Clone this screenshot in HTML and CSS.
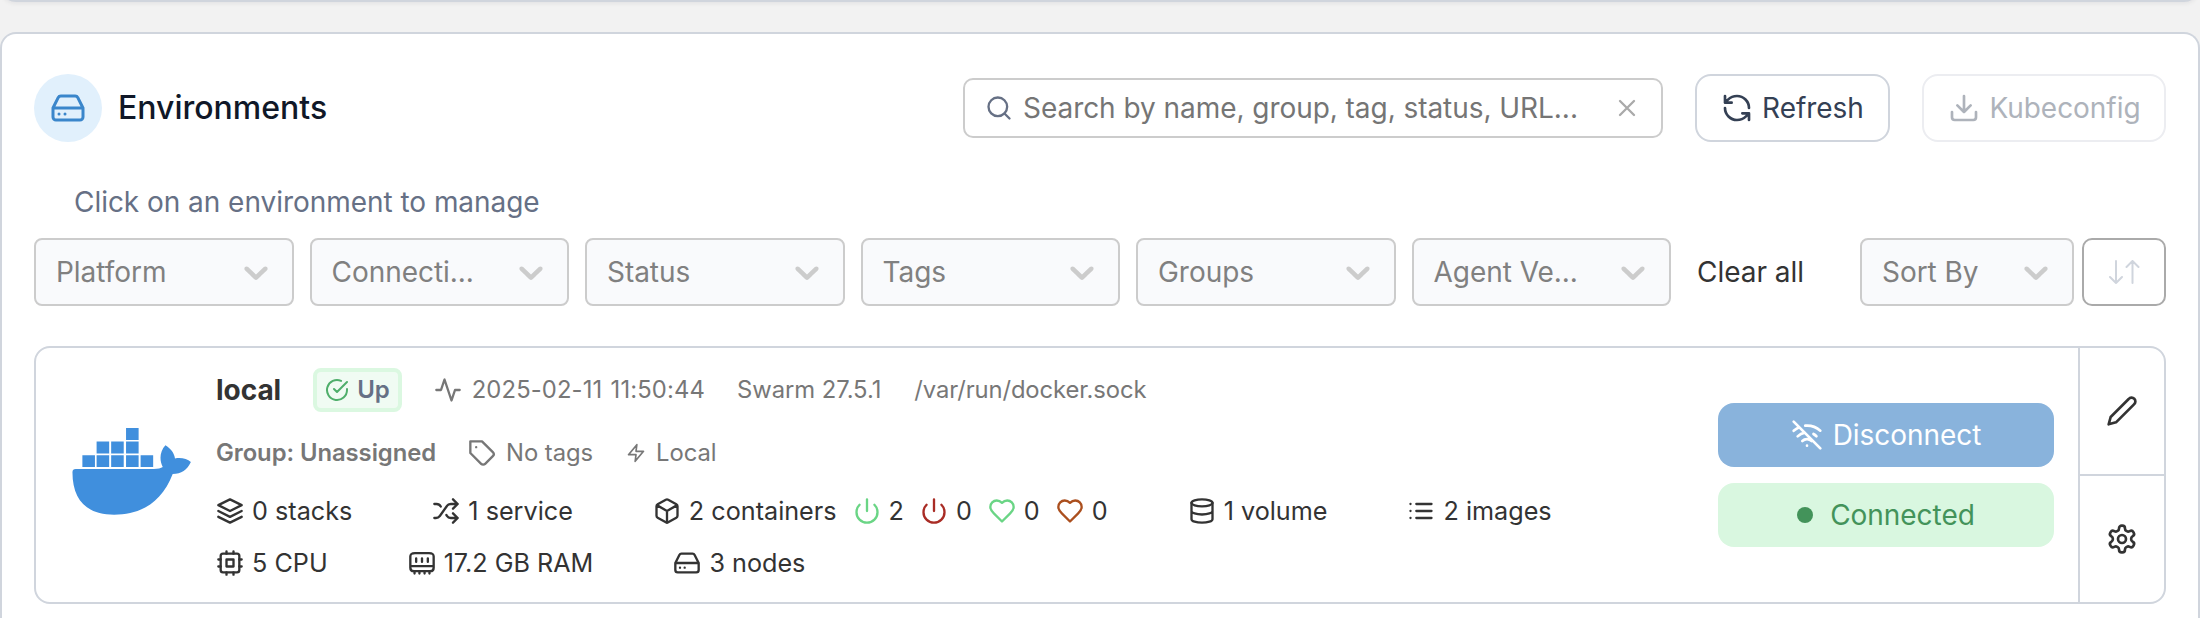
FILE: index.html
```html
<!DOCTYPE html>
<html lang="en">
<head>
<meta charset="utf-8">
<title>Environments</title>
<link rel="stylesheet" href="styles.css">
</head>
<body>
<svg class="sprite" aria-hidden="true">
  <symbol id="hard-drive" viewBox="0 0 24 24"><path d="M22 12H2M5.45 5.11 2 12v6a2 2 0 0 0 2 2h16a2 2 0 0 0 2-2v-6l-3.45-6.89A2 2 0 0 0 16.76 4H7.24a2 2 0 0 0-1.79 1.11zM6 16h.01M10 16h.01"/></symbol>
  <symbol id="search" viewBox="0 0 24 24"><circle cx="11" cy="11" r="8"/><path d="m21 21-4.3-4.3"/></symbol>
  <symbol id="close" viewBox="0 0 24 24"><path d="M18 6 6 18M6 6l12 12"/></symbol>
  <symbol id="refresh" viewBox="0 0 24 24"><path d="M21 12a9 9 0 0 0-9-9 9.75 9.75 0 0 0-6.74 2.74L3 8M3 3v5h5M3 12a9 9 0 0 0 9 9 9.75 9.75 0 0 0 6.74-2.74L21 16M16 16h5v5"/></symbol>
  <symbol id="download" viewBox="0 0 24 24"><path d="M21 15v4a2 2 0 0 1-2 2H5a2 2 0 0 1-2-2v-4M7 10l5 5 5-5M12 15V3"/></symbol>
  <symbol id="chevron" viewBox="0 0 20 20"><path d="M4.516 7.548c0.436-0.446 1.043-0.481 1.576 0l3.908 3.747 3.908-3.747c0.533-0.481 1.141-0.446 1.574 0 0.436 0.445 0.408 1.197 0 1.615-0.406 0.418-4.695 4.502-4.695 4.502-0.217 0.223-0.502 0.335-0.787 0.335s-0.57-0.112-0.789-0.335c0 0-4.287-4.084-4.695-4.502s-0.436-1.17 0-1.615z"/></symbol>
  <symbol id="sort" viewBox="0 0 32 24"><path d="M8 1v22M2 17l6 6 6-6M24.500 23V1M18.500 7l6-6 6 6"/></symbol>
  <symbol id="check-circle" viewBox="0 0 24 24"><path d="M22 11.08V12a10 10 0 1 1-5.93-9.14M22 4 12 14.01l-3-3"/></symbol>
  <symbol id="activity" viewBox="0 0 24 24"><path d="M22 12h-4l-3 9L9 3l-3 9H2"/></symbol>
  <symbol id="tag" viewBox="0 0 24 24"><path d="M12 2H2v10l9.29 9.29c.94.94 2.48.94 3.42 0l6.58-6.58c.94-.94.94-2.48 0-3.42L12 2ZM7 7h.01"/></symbol>
  <symbol id="zap" viewBox="0 0 24 24"><path d="M13 2 3 14h9l-1 8 10-12h-9l1-8z"/></symbol>
  <symbol id="layers" viewBox="0 0 24 24"><path d="m12 2 10 5-10 5L2 7zM2 17l10 5 10-5M2 12l10 5 10-5"/></symbol>
  <symbol id="shuffle" viewBox="0 0 24 24"><path d="M2 18h1.4c1.3 0 2.5-.6 3.3-1.7l6.1-8.6c.7-1.1 2-1.7 3.3-1.7H22M18 2l4 4-4 4M2 6h1.9c1.5 0 2.9.9 3.6 2.2M22 18h-5.9c-1.3 0-2.6-.7-3.3-1.8l-.5-.8M18 14l4 4-4 4"/></symbol>
  <symbol id="box" viewBox="0 0 24 24"><path d="M21 16V8a2 2 0 0 0-1-1.730l-7-4a2 2 0 0 0-2 0l-7 4A2 2 0 0 0 3 8v8a2 2 0 0 0 1 1.730l7 4a2 2 0 0 0 2 0l7-4A2 2 0 0 0 21 16zM3.27 6.96 12 12.01l8.730-5.050M12 22.080V12"/></symbol>
  <symbol id="power" viewBox="0 0 24 24"><path d="M18.360 6.640a9 9 0 1 1-12.730 0M12 2v10"/></symbol>
  <symbol id="heart" viewBox="0 0 24 24"><path d="M19 14c1.490-1.460 3-3.210 3-5.500A5.500 5.500 0 0 0 16.500 3c-1.760 0-3 .5-4.500 2-1.500-1.500-2.740-2-4.500-2A5.500 5.500 0 0 0 2 8.500c0 2.300 1.500 4.050 3 5.500l7 7Z"/></symbol>
  <symbol id="database" viewBox="0 0 24 24"><ellipse cx="12" cy="5" rx="9" ry="3"/><path d="M21 12c0 1.660-4 3-9 3s-9-1.340-9-3M3 5v14c0 1.660 4 3 9 3s9-1.340 9-3V5"/></symbol>
  <symbol id="list" viewBox="0 0 24 24"><path d="M8 6h13M8 12h13M8 18h13M3 6h.01M3 12h.01M3 18h.01"/></symbol>
  <symbol id="cpu" viewBox="0 0 24 24"><rect x="4" y="4" width="16" height="16" rx="2"/><path d="M9 9h6v6H9zM15 2v2M15 20v2M2 15h2M2 9h2M20 15h2M20 9h2M9 2v2M9 20v2"/></symbol>
  <symbol id="memory" viewBox="0 0 24 24"><path d="M2 16V6.500C2 4 3 3.500 6 3.500h12c3 0 4 .5 4 3V16c0 2-1 3-3 3H5c-2 0-3-1-3-3zM2 14.700h20M7 8v3M12 8v3M17 8v3M5.600 19v2M9.800 19v2M14.200 19v2M18.400 19v2"/></symbol>
  <symbol id="wifi-off" viewBox="0 0 24 24"><path d="m2 2 20 20M8.500 16.500a5 5 0 0 1 7 0M2 8.820a15 15 0 0 1 4.170-2.650M10.660 5c4.010-.36 8.140.9 11.340 3.760M16.850 11.250a10 10 0 0 1 2.220 1.680M5 13a10 10 0 0 1 5.240-2.760M12 20h.01"/></symbol>
  <symbol id="pencil" viewBox="0 0 24 24"><path d="M17 3a2.850 2.830 0 1 1 4 4L7.500 20.500 2 22l1.500-5.500Z"/></symbol>
  <symbol id="gear" viewBox="0 0 24 24"><path d="M12.220 2h-.44a2 2 0 0 0-2 2v.18a2 2 0 0 1-1 1.730l-.43.25a2 2 0 0 1-2 0l-.15-.08a2 2 0 0 0-2.730.73l-.22.38a2 2 0 0 0 .73 2.730l.15.1a2 2 0 0 1 1 1.720v.51a2 2 0 0 1-1 1.740l-.15.09a2 2 0 0 0-.73 2.730l.22.38a2 2 0 0 0 2.730.73l.15-.08a2 2 0 0 1 2 0l.43.25a2 2 0 0 1 1 1.730V20a2 2 0 0 0 2 2h.44a2 2 0 0 0 2-2v-.18a2 2 0 0 1 1-1.730l.43-.25a2 2 0 0 1 2 0l.15.08a2 2 0 0 0 2.730-.73l.22-.39a2 2 0 0 0-.73-2.730l-.15-.08a2 2 0 0 1-1-1.740v-.5a2 2 0 0 1 1-1.740l.15-.09a2 2 0 0 0 .73-2.730l-.22-.38a2 2 0 0 0-2.730-.73l-.15.08a2 2 0 0 1-2 0l-.43-.25a2 2 0 0 1-1-1.730V4a2 2 0 0 0-2-2z"/><circle cx="12" cy="12" r="3"/></symbol>
</svg>

<div class="prev-panel"></div>

<main class="panel">
  <header class="toolbar">
    <div class="badge-circle"><svg class="icon s36"><use href="#hard-drive"/></svg></div>
    <h1 class="title">Environments</h1>
    <div class="search">
      <svg class="icon s28 search-icon"><use href="#search"/></svg>
      <span class="search-text">Search by name, group, tag, status, URL...</span>
      <svg class="icon s28 search-clear"><use href="#close"/></svg>
    </div>
    <button class="btn refresh"><svg class="icon s32"><use href="#refresh"/></svg><span>Refresh</span></button>
    <button class="btn kubeconfig"><svg class="icon s32"><use href="#download"/></svg><span>Kubeconfig</span></button>
  </header>

  <p class="subtitle">Click on an environment to manage</p>

  <div class="filters">
    <div class="select"><span>Platform</span><svg class="chev"><use href="#chevron"/></svg></div>
    <div class="select"><span>Connecti...</span><svg class="chev"><use href="#chevron"/></svg></div>
    <div class="select"><span>Status</span><svg class="chev"><use href="#chevron"/></svg></div>
    <div class="select"><span>Tags</span><svg class="chev"><use href="#chevron"/></svg></div>
    <div class="select"><span>Groups</span><svg class="chev"><use href="#chevron"/></svg></div>
    <div class="select"><span>Agent Ve...</span><svg class="chev"><use href="#chevron"/></svg></div>
    <span class="clear">Clear all</span>
    <div class="select sort-by"><span>Sort By</span><svg class="chev"><use href="#chevron"/></svg></div>
    <button class="sort-dir"><svg class="icon sort-icon"><use href="#sort"/></svg></button>
  </div>

  <section class="env">
    <div class="logo">
      <svg class="docker" viewBox="216 293 360 263">
        <path d="M378 293h38v36h-38zM289 334h38v36h-38zM333 334h38v36h-38zM378 334h38v36h-38zM246 375h38v36h-38zM289 375h38v36h-38zM333 375h38v36h-38zM378 375h38v36h-38zM422 375h38v36h-38z"/>
        <path d="M226 417H462C475 417 483 415 489 411C478 390 480 363 497 345C513 355 524 369 526 385C545 382 563 386 574 396C563 420 545 432 519 432C487 516 425 555 342 555C259 555 216 511 216 427Q216 417 226 417Z"/>
      </svg>
    </div>
    <div class="info">
      <div class="row row-title">
        <span class="name">local</span>
        <span class="status"><svg class="icon s24"><use href="#check-circle"/></svg>Up</span>
        <span class="meta m-time"><svg class="icon s28"><use href="#activity"/></svg>2025-02-11 11:50:44</span>
        <span class="meta m-engine">Swarm 27.5.1</span>
        <span class="meta m-url">/var/run/docker.sock</span>
      </div>
      <div class="row row-group">
        <span class="group">Group: Unassigned</span>
        <span class="meta m-tags"><svg class="icon s28"><use href="#tag"/></svg>No tags</span>
        <span class="meta m-local"><svg class="icon s20"><use href="#zap"/></svg>Local</span>
      </div>
      <div class="row stats">
        <span class="stat"><svg class="icon s28"><use href="#layers"/></svg>0 stacks</span>
        <span class="stat"><svg class="icon s28"><use href="#shuffle"/></svg>1 service</span>
        <span class="stat containers"><svg class="icon s28"><use href="#box"/></svg>2 containers
          <span class="counts">
            <span class="count"><svg class="icon s28 ok"><use href="#power"/></svg>2</span>
            <span class="count"><svg class="icon s28 bad"><use href="#power"/></svg>0</span>
            <span class="count"><svg class="icon s28 ok"><use href="#heart"/></svg>0</span>
            <span class="count"><svg class="icon s28 warn"><use href="#heart"/></svg>0</span>
          </span>
        </span>
        <span class="stat"><svg class="icon s28"><use href="#database"/></svg>1 volume</span>
        <span class="stat"><svg class="icon s28"><use href="#list"/></svg>2 images</span>
      </div>
      <div class="row stats stats-2">
        <span class="stat"><svg class="icon s28"><use href="#cpu"/></svg>5 CPU</span>
        <span class="stat"><svg class="icon s28"><use href="#memory"/></svg>17.2 GB RAM</span>
        <span class="stat"><svg class="icon s28"><use href="#hard-drive"/></svg>3 nodes</span>
      </div>
    </div>
    <div class="connect">
      <button class="pill disconnect"><svg class="icon s32"><use href="#wifi-off"/></svg>Disconnect</button>
      <div class="pill connected"><i class="dot"></i>Connected</div>
    </div>
    <div class="side">
      <button class="side-btn"><svg class="icon s32"><use href="#pencil"/></svg></button>
      <button class="side-btn"><svg class="icon s32"><use href="#gear"/></svg></button>
    </div>
  </section>
</main>
</body>
</html>
```

FILE: styles.css
```css
* { box-sizing: border-box; }
body { margin: 0; height: 618px; overflow: hidden; background: #f2f2f2; color: #333; font-family: Inter, "Liberation Sans", sans-serif; font-size: 28px; line-height: 40px; letter-spacing: -.04px; }
button { font: inherit; letter-spacing: inherit; color: inherit; background: none; border: 0; padding: 0; margin: 0; }
.sprite { display: none; }
.icon { display: block; flex: none; fill: none; stroke: currentColor; stroke-width: 2; stroke-linecap: round; stroke-linejoin: round; }
.s20 { width: 20px; height: 20px; }
.s24 { width: 24px; height: 24px; }
.s28 { width: 28px; height: 28px; }
.s32 { width: 32px; height: 32px; }
.s36 { width: 36px; height: 36px; }

.prev-panel { height: 18px; margin-top: -16px; background: #fff; border: 2px solid #d0d5dd; border-radius: 0 0 16px 16px; box-shadow: 0 2px 4px rgba(16, 24, 40, .06); }
.panel { margin-top: 30px; height: 586px; padding: 40px 32px 0; background: #fff; border: 2px solid #d0d5dd; border-bottom: 0; border-radius: 16px 16px 0 0; }

.toolbar { display: flex; align-items: center; height: 68px; }
.badge-circle { display: grid; place-items: center; width: 68px; height: 68px; border-radius: 50%; background: #e1f0fc; color: #3a86cb; }
.title { margin: 0 0 0 16px; font-size: 32px; font-weight: 500; color: #101828; letter-spacing: 0; }
.search { display: flex; align-items: center; width: 700px; height: 60px; margin-left: auto; padding: 0 20px; border: 2px solid #ccc; border-radius: 10px; }
.search-icon { color: #667085; }
.search-text { margin-left: 10px; color: #757575; white-space: nowrap; letter-spacing: -.05px; }
.search-clear { margin-left: auto; color: #aaa; }
.btn { display: flex; align-items: center; justify-content: center; height: 68px; margin-left: 32px; border: 2px solid #d0d5dd; border-radius: 16px; }
.refresh { gap: 9px; width: 195px; color: #344054; }
.kubeconfig { gap: 9px; width: 244px; padding-left: 1px; color: #aeb3bb; border-color: #ecedf1; }

.subtitle { margin: 40px 0 0 40px; color: #667085; }

.filters { display: flex; align-items: center; height: 68px; margin-top: 16px; }
.select { display: flex; align-items: center; justify-content: space-between; width: 259.5px; height: 68px; margin-right: 16px; padding: 0 16px 0 20px; background: #f9fafc; border: 2px solid #ccc; border-radius: 8px; color: #808080; white-space: nowrap; }
.chev { width: 40px; height: 40px; fill: #ccc; }
.clear { margin-left: 10px; color: #333; }
.select.sort-by { width: 214px; margin: 0 8px 0 auto; }
.sort-dir { display: grid; place-items: center; width: 84px; height: 68px; border: 2px solid #aaa; border-radius: 10px; color: #d0d5dd; }
.sort-icon { width: 32px; height: 24px; overflow: visible; }

.env { display: flex; height: 258px; margin-top: 40px; border: 2px solid #d0d5dd; border-radius: 16px; }
.logo { width: 180px; padding: 80px 0 0 36px; }
.docker { display: block; width: 120px; height: 87px; fill: #408fdd; }
.info { flex: 1; }
.row { display: flex; align-items: center; white-space: nowrap; }
.row-title { height: 44px; margin-top: 20px; font-size: 23.8px; }
.name { font-size: 28px; font-weight: 700; }
.status { display: flex; align-items: center; gap: 8px; height: 44px; margin-left: 32px; padding: 0 8px; border: 4px solid #dbf8e1; border-radius: 8px; background: #f0fbf3; color: #667085; font-weight: 600; font-size: 24px; }
.status .icon { color: #4fae6b; }
.meta { display: flex; align-items: center; gap: 10px; color: #777; }
.m-time { margin-left: 32px; letter-spacing: .13px; word-spacing: 1.5px; }
.m-engine { margin-left: 32px; }
.m-url { margin-left: 33px; letter-spacing: -.11px; }
.row-group { height: 40px; margin-top: 21px; font-size: 23.8px; }
.group { color: #777; font-weight: 600; }
.m-tags { margin-left: 32px; }
.m-local { margin-left: 33px; }
.stats { height: 52px; margin-top: 12px; font-size: 25.2px; gap: 80px; letter-spacing: 0; }
.stats-2 { margin-top: 0; }
.stat, .count { display: flex; align-items: center; gap: 8px; }
.counts { display: flex; gap: 16px; margin-left: 8px; }
.ok { color: #6ad585; }
.bad { color: #a92c25; }
.warn { color: #ab4f1e; }

.connect { display: flex; flex-direction: column; gap: 16px; width: 336px; margin-right: 24px; padding-top: 55px; }
.pill { display: flex; align-items: center; justify-content: center; width: 336px; height: 64px; border-radius: 16px; }
.disconnect { gap: 10px; background: #89b3dc; color: #fff; }
.connected { gap: 17px; background: #d9f7e0; color: #43935a; }
.dot { width: 16px; height: 16px; border-radius: 50%; background: #43935a; }
.side { display: grid; grid-template-rows: 126px 1fr; width: 86px; border-left: 2px solid #d0d5dd; }
.side-btn { display: grid; place-items: center; }
.side-btn + .side-btn { border-top: 2px solid #d0d5dd; }
```
